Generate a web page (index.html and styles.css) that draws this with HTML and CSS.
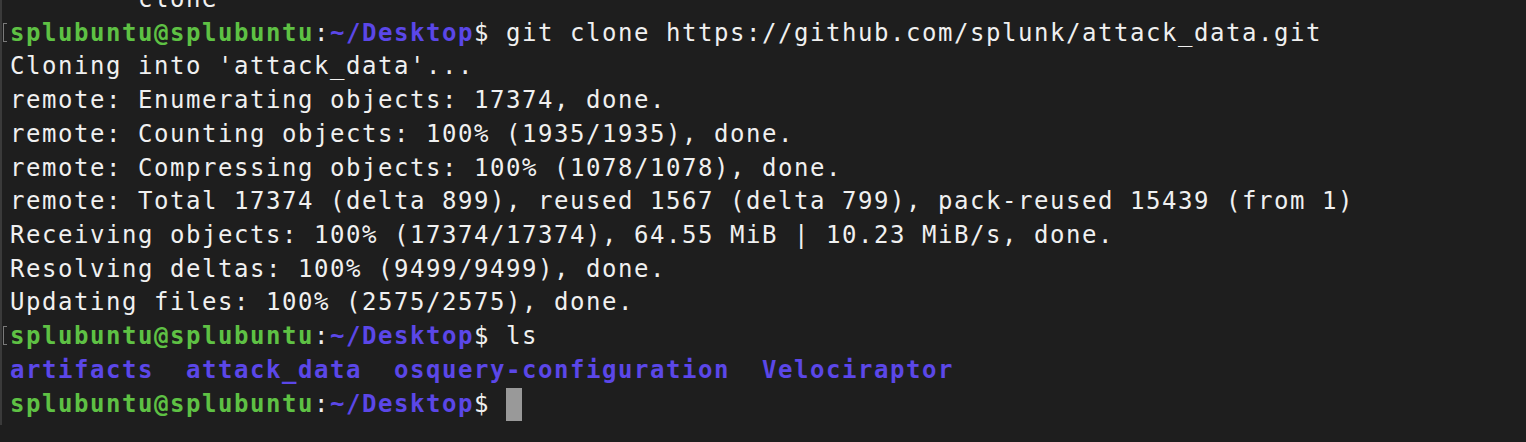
FILE: index.html
```html
<!DOCTYPE html>
<html>
<head>
<meta charset="utf-8">
<link rel="stylesheet" href="styles.css">
</head>
<body>
<div class="term">
  <div class="line"><span class="gutter"></span><span class="txt">        clone</span></div>
  <div class="line"><span class="gutter"><span class="mark"></span></span><span class="txt"><span class="user">splubuntu@splubuntu</span>:<span class="path">~/Desktop</span>$ git clone https://github.com/splunk/attack_data.git</span></div>
  <div class="line"><span class="gutter"></span><span class="txt">Cloning into 'attack_data'...</span></div>
  <div class="line"><span class="gutter"></span><span class="txt">remote: Enumerating objects: 17374, done.</span></div>
  <div class="line"><span class="gutter"></span><span class="txt">remote: Counting objects: 100% (1935/1935), done.</span></div>
  <div class="line"><span class="gutter"></span><span class="txt">remote: Compressing objects: 100% (1078/1078), done.</span></div>
  <div class="line"><span class="gutter"></span><span class="txt">remote: Total 17374 (delta 899), reused 1567 (delta 799), pack-reused 15439 (from 1)</span></div>
  <div class="line"><span class="gutter"></span><span class="txt">Receiving objects: 100% (17374/17374), 64.55 MiB | 10.23 MiB/s, done.</span></div>
  <div class="line"><span class="gutter"></span><span class="txt">Resolving deltas: 100% (9499/9499), done.</span></div>
  <div class="line"><span class="gutter"></span><span class="txt">Updating files: 100% (2575/2575), done.</span></div>
  <div class="line"><span class="gutter"><span class="mark"></span></span><span class="txt"><span class="user">splubuntu@splubuntu</span>:<span class="path">~/Desktop</span>$ ls</span></div>
  <div class="line"><span class="gutter"></span><span class="txt"><span class="path">artifacts</span>  <span class="path">attack_data</span>  <span class="path">osquery-configuration</span>  <span class="path">Velociraptor</span></span></div>
  <div class="line"><span class="gutter"></span><span class="txt"><span class="user">splubuntu@splubuntu</span>:<span class="path">~/Desktop</span>$ <span class="cursor"></span></span></div>
</div>
</body>
</html>
```

FILE: styles.css
```css
html, body {
  margin: 0;
  padding: 0;
  background: #1e1e1e;
  height: 100%;
  overflow: hidden;
}
.term {
  border-left: 2px solid #3a3a3a;
  height: 100%;
  box-sizing: border-box;
  margin-top: -17px;
  font-family: "DejaVu Sans Mono", monospace;
  font-size: 24px;
  letter-spacing: 1.55px;
  line-height: 33.72px;
  color: #f0f0f0;
}
.line {
  display: flex;
  height: 33.72px;
  white-space: pre;
}
.gutter {
  width: 8px;
  flex: none;
  position: relative;
}
.mark {
  position: absolute;
  left: 1px;
  top: 6px;
  width: 3px;
  height: 17px;
  border: 1px solid #7a7a7a;
  border-right: none;
}
.txt {
  flex: none;
}
.user {
  color: #5ec144;
  font-weight: bold;
}
.path {
  color: #5b47e8;
  font-weight: bold;
}
.cursor {
  display: inline-block;
  width: 16px;
  height: 33px;
  background: #999999;
  vertical-align: top;
}
```
